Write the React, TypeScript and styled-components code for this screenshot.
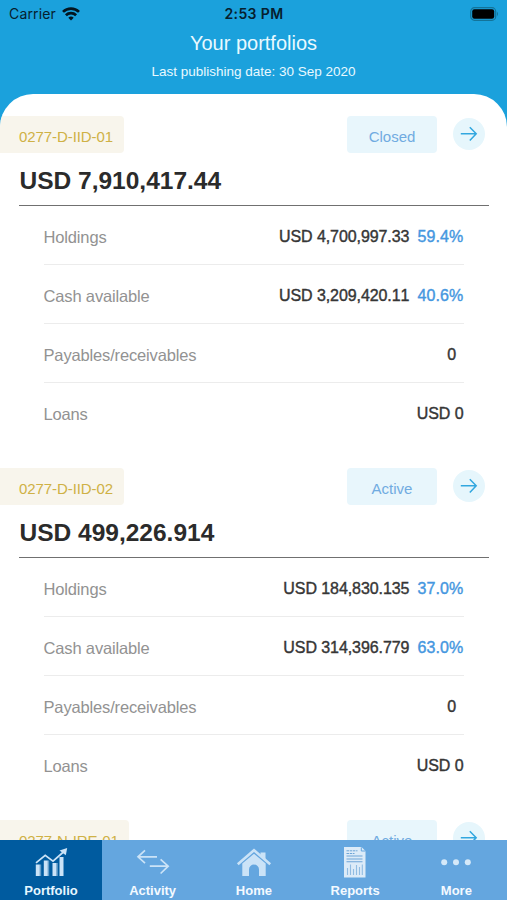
import React from "react";
import styled, { createGlobalStyle } from "styled-components";

const GlobalStyle = createGlobalStyle`
  *, *::before, *::after { box-sizing: border-box; }
  body { margin: 0; background: #fff; }
`;

const Screen = styled.div`
  display: flex;
  flex-direction: column;
  width: 507px;
  height: 900px;
  overflow: hidden;
  background: #1ba1dc;
  font-family: "Liberation Sans", Arial, sans-serif;
  white-space: nowrap;
`;

const StatusBar = styled.div`
  display: grid;
  grid-template-columns: 1fr auto 1fr;
  align-items: center;
  height: 27px;
  padding: 0 8px 0 9px;
  flex: none;
  color: #06202e;
  font-family: Inter, sans-serif;
  font-size: 14px;
`;

const Carrier = styled.div`
  display: flex;
  align-items: center;
  gap: 6px;
  letter-spacing: 0.15px;
`;

const Clock = styled.div`
  font-weight: 600;
  font-size: 14px;
  letter-spacing: 0.4px;
`;

const Battery = styled.svg`
  justify-self: end;
`;

const Heading = styled.header`
  display: flex;
  flex-direction: column;
  align-items: center;
  height: 66.5px;
  flex: none;
  color: #e9f9ff;
`;

const Title = styled.h1`
  margin: 5px 0 0;
  font-size: 20px;
  font-weight: 400;
  line-height: 23px;
`;

const Published = styled.p`
  margin: 9px 0 0;
  font-size: 13.5px;
  line-height: 15px;
`;

const Sheet = styled.main`
  flex: 1;
  min-height: 0;
  overflow: hidden;
  padding-top: 22.5px;
  border-radius: 33px 33px 0 0;
  background: #fff;
`;

const Portfolio = styled.section`
  height: 352px;
`;

const TopRow = styled.div`
  display: flex;
  align-items: center;
  height: 37px;
  padding-right: 22px;
`;

const Tag = styled.div<{ $width: number }>`
  width: ${(p) => p.$width}px;
  height: 37px;
  padding: 2px 0 0 19px;
  border-radius: 0 4px 4px 0;
  background: #f8f5ec;
  color: #cfb145;
  font-size: 15px;
  line-height: 37px;
  letter-spacing: -0.08px;
`;

const State = styled.div`
  width: 90px;
  height: 37px;
  margin-left: auto;
  padding-top: 2px;
  border-radius: 4px;
  background: #e8f6fc;
  color: #70abe1;
  font-size: 15px;
  line-height: 37px;
  text-align: center;
`;

const OpenButton = styled.button`
  display: grid;
  place-items: center;
  width: 32px;
  height: 32px;
  margin: -1px 0 0 16px;
  padding: 0;
  border: 0;
  border-radius: 50%;
  background: #e6f6fc;
`;

const Total = styled.div`
  height: 53px;
  margin: 0 18px 0 19px;
  padding: 14px 0 0 0.5px;
  border-bottom: 1.5px solid #707070;
  color: #2b2b2b;
  font-size: 24.5px;
  font-weight: 700;
  line-height: 28px;
`;

const Details = styled.dl`
  margin: 0 43px 0 44px;
`;

const Row = styled.div`
  display: flex;
  justify-content: space-between;
  height: 59px;
  border-bottom: 1.5px solid #ececec;
  &:last-child { border-bottom: 0; }
`;

const Label = styled.dt`
  margin-left: -0.5px;
  padding-top: 21px;
  color: #929292;
  font-size: 16.5px;
  line-height: 20px;
  letter-spacing: -0.15px;
`;

const Amount = styled.dd<{ $inset?: boolean }>`
  display: flex;
  gap: 8px;
  margin: 0;
  padding: 21px ${(p) => (p.$inset ? 8 : 0.5)}px 0 0;
  color: #363636;
  font-size: 16px;
  line-height: 20px;
  letter-spacing: -0.08px;
  font-kerning: none;
  -webkit-text-stroke: 0.4px currentColor;
`;

const Share = styled.span`
  color: #4597e0;
  letter-spacing: 0.15px;
`;

const TabBar = styled.nav`
  display: grid;
  grid-template-columns: 102px repeat(4, 1fr);
  flex: none;
  height: 60px;
  background: #64a6df;
`;

const Tab = styled.div<{ $active?: boolean }>`
  display: flex;
  flex-direction: column;
  align-items: center;
  padding-top: 6px;
  background: ${(p) => (p.$active ? "#005b9f" : "transparent")};
  color: ${(p) => (p.$active ? "#e6f7ff" : "#f4faff")};
  font-size: 13px;
  font-weight: 700;
  line-height: 16px;
`;

const Glyph = styled.svg`
  display: block;
  margin-bottom: 5px;
  color: #cbe3f7;
`;

const WifiIcon = () => (
  <svg width="18" height="14" viewBox="0 0 18 14" fill="none" stroke="#031620" strokeWidth="2.7">
    <path d="M1 4.9C5.5 .45 12.5 .45 17 4.9" />
    <path d="M3.9 8.2C6.8 5.4 11.2 5.4 14.1 8.2" />
    <path d="M6.3 10.8Q9 8.3 11.7 10.8L9 13.6Z" fill="#031620" stroke="none" />
  </svg>
);

const ArrowIcon = () => (
  <svg width="18" height="16" viewBox="0 0 18 16" fill="none" stroke="#32a7df" strokeWidth="1.5">
    <path d="M.8 7.7H16M9.8 1.2 16.2 7.7 9.8 14.4" />
  </svg>
);

const tabs = [
  {
    label: "Portfolio",
    active: true,
    icon: (
      <>
        <path d="M2.8 18.5h4V30h-4zM10.8 14.5h4V30h-4zM19.5 17h4v13h-4zM26.5 11h4v19h-4z" fill="currentColor" />
        <path d="M6.8 18.5h1.4V30H6.8zM14.8 14.5h1.4V30h-1.4zM23.5 17h1.3v13h-1.3z" fill="currentColor" opacity=".5" />
        <path d="m3 16.8 9.2-7.4 7.8 5.8L31 5.5" fill="none" stroke="currentColor" strokeWidth="1.7" />
        <path d="m26.5 4.5 7.7-2.6-1.4 7.4z" fill="currentColor" />
      </>
    ),
  },
  {
    label: "Activity",
    icon: (
      <path d="M22 10.8H3.2M10 4.4 3 10.8 10 17.2M14.8 20.2H32.8M25.6 13.3 33.2 20.2 25.6 27.5" fill="none" stroke="currentColor" strokeWidth="1.7" />
    ),
  },
  {
    label: "Home",
    icon: (
      <>
        <path d="M1.8 18.2 18 4.3 34.2 18.2" fill="none" stroke="currentColor" strokeWidth="2.6" />
        <path d="M24.5 6.5h5v8.7L24.5 10.8z" fill="currentColor" />
        <path d="M6.3 17.5 18 7.8 29.7 17.5V30H23V23.5a5 5 0 0 0-10 0V30H6.3Z" fill="currentColor" />
      </>
    ),
  },
  {
    label: "Reports",
    icon: (
      <>
        <path d="M7 1.1h17.5L28.5 5v26.5H7z" fill="#dcebf8" />
        <path d="M24.3 1.3V5h4.2" fill="none" stroke="#64a6df" />
        <path d="M9.5 4.8h11M9.5 7.5h8" stroke="#6ea5d6" strokeDasharray="2.5 .7" />
        <path d="M9.5 10h16M9.5 13h16M9.5 15.8h16" stroke="#6ea5d6" strokeWidth="1.1" />
        <path d="M10.5 22v7M13.5 18.5v10.5M16.5 23v6M19.5 19v10M22.5 21v8M25.3 18.5v10.5" stroke="#91bce2" strokeWidth="1.1" />
      </>
    ),
  },
  {
    label: "More",
    icon: (
      <g fill="#d5e9f9">
        <circle cx="6.2" cy="16.3" r="3" />
        <circle cx="18" cy="16.3" r="3" />
        <circle cx="29.8" cy="16.3" r="3" />
      </g>
    ),
  },
];

type Line = { label: string; value: string; share?: string };
type Item = { code: string; state: string; width: number; total?: string; lines: Line[] };

const portfolios: Item[] = [
  {
    code: "0277-D-IID-01",
    state: "Closed",
    width: 123.5,
    total: "USD 7,910,417.44",
    lines: [
      { label: "Holdings", value: "USD 4,700,997.33", share: "59.4%" },
      { label: "Cash available", value: "USD 3,209,420.11", share: "40.6%" },
      { label: "Payables/receivables", value: "0" },
      { label: "Loans", value: "USD 0" },
    ],
  },
  {
    code: "0277-D-IID-02",
    state: "Active",
    width: 124,
    total: "USD 499,226.914",
    lines: [
      { label: "Holdings", value: "USD 184,830.135", share: "37.0%" },
      { label: "Cash available", value: "USD 314,396.779", share: "63.0%" },
      { label: "Payables/receivables", value: "0" },
      { label: "Loans", value: "USD 0" },
    ],
  },
  { code: "0277-N-IRE-01", state: "Active", width: 128.5, lines: [] },
];

export default function App() {
  return (
    <>
      <GlobalStyle />
      <Screen>
        <StatusBar>
          <Carrier>
            Carrier
            <WifiIcon />
          </Carrier>
          <Clock>2:53 PM</Clock>
          <Battery width="29" height="14" viewBox="0 0 29 14">
            <rect x=".7" y=".7" width="25" height="12.6" rx="3.8" fill="none" stroke="#137399" strokeWidth="1.2" />
            <rect x="2.2" y="2.3" width="22" height="9.4" rx="2.2" fill="#000" />
            <path d="M27 4.8q2 2.2 0 4.4z" fill="#137399" />
          </Battery>
        </StatusBar>
        <Heading>
          <Title>Your portfolios</Title>
          <Published>Last publishing date: 30 Sep 2020</Published>
        </Heading>
        <Sheet>
          {portfolios.map((p) => (
            <Portfolio key={p.code}>
              <TopRow>
                <Tag $width={p.width}>{p.code}</Tag>
                <State>{p.state}</State>
                <OpenButton aria-label="Open portfolio">
                  <ArrowIcon />
                </OpenButton>
              </TopRow>
              {p.total && <Total>{p.total}</Total>}
              <Details>
                {p.lines.map((l) => (
                  <Row key={l.label}>
                    <Label>{l.label}</Label>
                    <Amount $inset={l.value === "0"}>
                      {l.value}
                      {l.share && <Share>{l.share}</Share>}
                    </Amount>
                  </Row>
                ))}
              </Details>
            </Portfolio>
          ))}
        </Sheet>
        <TabBar>
          {tabs.map((t) => (
            <Tab key={t.label} $active={t.active}>
              <Glyph width="36" height="32" viewBox="0 0 36 32">
                {t.icon}
              </Glyph>
              {t.label}
            </Tab>
          ))}
        </TabBar>
      </Screen>
    </>
  );
}
